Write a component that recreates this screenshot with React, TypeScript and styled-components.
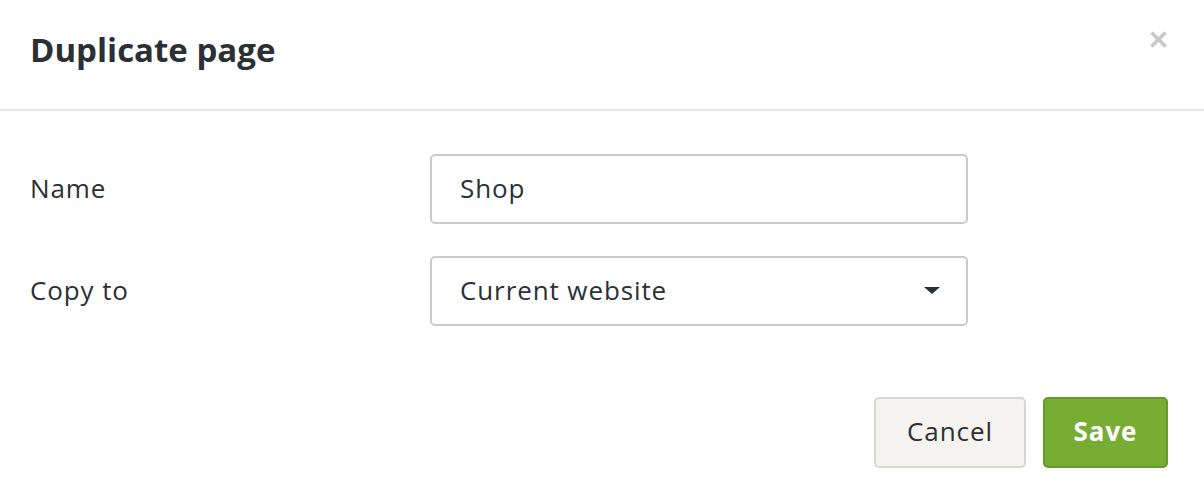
import styled, { createGlobalStyle } from 'styled-components';

const GlobalStyle = createGlobalStyle`
  html, body {
    margin: 0;
    padding: 0;
    background: #fff;
  }
  body {
    font-family: "Open Sans", "Liberation Sans", sans-serif;
    color: #2b3035;
  }
`;

const Dialog = styled.div`
  width: 1204px;
  height: 504px;
  display: flex;
  flex-direction: column;
  background: #fff;
  box-sizing: border-box;
`;

const Header = styled.div`
  height: 111px;
  box-sizing: border-box;
  display: flex;
  align-items: center;
  justify-content: space-between;
  padding: 0 36px 0 30px;
  border-bottom: 2px solid #e6e6e6;
`;

const Title = styled.h1`
  margin: 0 0 10px;
  font-size: 33px;
  font-weight: 700;
  color: #2b3035;
`;

const CloseButton = styled.button`
  border: 0;
  background: none;
  padding: 0;
  width: 20px;
  height: 20px;
  margin-bottom: 30px;
  cursor: pointer;
  display: flex;
  align-items: center;
  justify-content: center;
`;

const Body = styled.div`
  display: flex;
  flex-direction: column;
  gap: 32px;
  padding: 43px 236px 0 30px;
`;

const Row = styled.div`
  display: flex;
  align-items: center;
`;

const Label = styled.label`
  width: 400px;
  font-size: 26px;
  letter-spacing: 0.9px;
  margin-top: -3px;
`;

const Field = styled.div`
  flex: 1;
  height: 70px;
  box-sizing: border-box;
  border: 2px solid #c8ccd0;
  border-radius: 5px;
  display: flex;
  align-items: center;
  justify-content: space-between;
  padding: 0 26px 2px 28px;
  font-size: 26px;
  letter-spacing: 0.9px;
  color: #2b3035;
`;

const Caret = styled.span`
  width: 0;
  height: 0;
  border-left: 8px solid transparent;
  border-right: 8px solid transparent;
  border-top: 7px solid #2b3035;
`;

const Footer = styled.div`
  display: flex;
  justify-content: flex-end;
  gap: 17px;
  padding: 71px 36px 0 0;
`;

const Button = styled.button<{ primary?: boolean }>`
  height: 71px;
  box-sizing: border-box;
  border-radius: 5px;
  font-family: inherit;
  font-size: 26px;
  letter-spacing: 0.9px;
  font-weight: ${({ primary }) => (primary ? 700 : 400)};
  width: ${({ primary }) => (primary ? '125px' : '152px')};
  padding: 0 0 3px;
  background: ${({ primary }) => (primary ? '#77ad33' : '#f4f3ef')};
  color: ${({ primary }) => (primary ? '#fff' : '#2b3035')};
  border: 2px solid ${({ primary }) => (primary ? '#68992b' : '#d6d6d2')};
  cursor: pointer;
`;

export default function App() {
  return (
    <>
      <GlobalStyle />
      <Dialog>
        <Header>
          <Title>Duplicate page</Title>
          <CloseButton aria-label="Close">
            <svg width="19" height="17" viewBox="0 0 19 17">
              <path d="M2.5 1.5 L16.5 15.5 M16.5 1.5 L2.5 15.5" stroke="#c9c9c9" strokeWidth="3.6" />
            </svg>
          </CloseButton>
        </Header>
        <Body>
          <Row>
            <Label>Name</Label>
            <Field>Shop</Field>
          </Row>
          <Row>
            <Label>Copy to</Label>
            <Field>
              Current website
              <Caret />
            </Field>
          </Row>
        </Body>
        <Footer>
          <Button>Cancel</Button>
          <Button primary>Save</Button>
        </Footer>
      </Dialog>
    </>
  );
}
